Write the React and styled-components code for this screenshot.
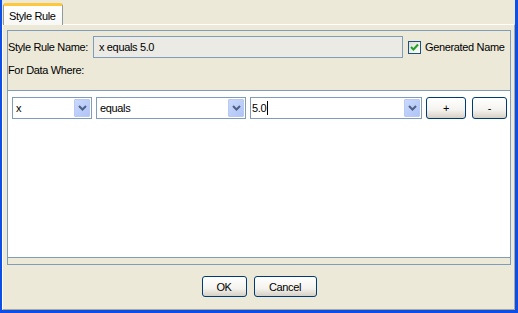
import React from 'react';
import styled, { createGlobalStyle } from 'styled-components';

const GlobalStyle = createGlobalStyle`
  html, body {
    margin: 0;
    padding: 0;
    background: #ece9d8;
  }
  body {
    font-family: "Liberation Sans", Arial, sans-serif;
    font-size: 11px;
    color: #000;
  }
`;

const Window = styled.div`
  width: 518px;
  height: 313px;
  box-sizing: border-box;
  display: flex;
  flex-direction: column;
  background: #ece9d8;
  border-left: 2px solid #0d4fe6;
  border-right: 3px solid #0d4fe6;
  border-bottom: 3px solid #0d4fe6;
  letter-spacing: -0.35px;
`;

const TabStrip = styled.div`
  height: 24px;
  display: flex;
  align-items: flex-end;
  padding-left: 1px;
`;

const Tab = styled.div`
  width: 60px;
  height: 22px;
  box-sizing: border-box;
  border: 1px solid #919b9c;
  border-top: 3px solid #ffc73c;
  border-bottom: none;
  border-radius: 3px 3px 0 0;
  background: linear-gradient(#ffffff, #f7f7f4);
  padding-left: 5px;
  display: flex;
  align-items: center;
  margin-bottom: -1px;
  position: relative;
  z-index: 1;
`;

const TabPane = styled.div`
  flex: 1;
  display: flex;
  flex-direction: column;
  border-top: 1px solid #fff;
  border-left: 1px solid #fff;
  border-right: 1px solid #aca899;
  border-bottom: 1px solid #aca899;
  padding: 5px 3px 0 4px;
`;

const Group = styled.div`
  height: 235px;
  box-sizing: border-box;
  border: 1px solid #7f9db9;
  display: flex;
  flex-direction: column;
`;

const NameRow = styled.div`
  margin-top: 5px;
  height: 22px;
  display: flex;
  align-items: center;
`;

const Label = styled.span`
  white-space: nowrap;
  line-height: 13px;
`;

const NameField = styled.div`
  margin-left: 5px;
  width: 310px;
  height: 22px;
  box-sizing: border-box;
  border: 1px solid #7f9db9;
  background: #ebeae4;
  padding-left: 5px;
  display: flex;
  align-items: center;
`;

const CheckLabel = styled.label`
  margin-left: 5px;
  display: flex;
  align-items: center;
  gap: 4px;
`;

const CheckBox = styled.span`
  width: 13px;
  height: 13px;
  box-sizing: border-box;
  border: 1px solid #1c5180;
  background: linear-gradient(135deg, #dcdcd7, #ffffff);
  display: flex;
  align-items: center;
  justify-content: center;
`;

const WhereLabel = styled.div`
  margin-top: 6px;
  height: 13px;
  line-height: 13px;
`;

const ListArea = styled.div`
  margin-top: 13px;
  height: 168px;
  box-sizing: border-box;
  border-top: 1px solid #7f9db9;
  border-bottom: 1px solid #7f9db9;
  background: #fff;
  padding: 6px 0 0 4px;
`;

const RuleRow = styled.div`
  display: flex;
  align-items: center;
`;

const Combo = styled.div`
  width: ${p => p.$width}px;
  margin-right: ${p => p.$gap}px;
  height: 22px;
  box-sizing: border-box;
  border: 1px solid #7f9db9;
  background: #fff;
  display: flex;
  align-items: center;
  padding: 1px 1px 1px ${p => (p.$editable ? 1 : 3)}px;
`;

const ComboText = styled.span`
  flex: 1;
  display: flex;
  align-items: center;
`;

const Caret = styled.span`
  width: 1px;
  height: 14px;
  background: #000;
  margin-left: 1px;
`;

const ArrowButton = styled.span`
  width: 16px;
  height: 18px;
  box-sizing: border-box;
  border: 1px solid #b9c9ef;
  border-radius: 1px;
  background: linear-gradient(135deg, #c9d8fc, #b0c4f7);
  display: flex;
  align-items: center;
  justify-content: center;
`;

const XpButton = styled.button`
  width: ${p => p.$width}px;
  height: ${p => p.$height || 21}px;
  margin-right: ${p => p.$gap || 0}px;
  box-sizing: border-box;
  border: 1px solid #003c74;
  border-radius: 3px;
  background: linear-gradient(#ffffff 0%, #f4f3ee 60%, #d6d0c5 100%);
  font-family: "Liberation Sans", Arial, sans-serif;
  font-size: 11px;
  letter-spacing: -0.35px;
  color: #000;
  padding: 0;
`;

const Footer = styled.div`
  flex: 1;
  display: flex;
  justify-content: center;
  align-items: flex-start;
  gap: 7px;
  padding-top: 11px;
`;

const Chevron = () => (
  <svg width="9" height="6" viewBox="0 0 9 6">
    <path d="M1 1 L4.5 4.5 L8 1" fill="none" stroke="#4d6185" strokeWidth="2" />
  </svg>
);

const Check = () => (
  <svg width="9" height="9" viewBox="0 0 9 9">
    <path d="M1 4 L3.5 6.5 L8 1.5" fill="none" stroke="#21a121" strokeWidth="2" />
  </svg>
);

const ComboBox = ({ width, gap, editable, children }) => (
  <Combo $width={width} $gap={gap} $editable={editable}>
    <ComboText>
      {children}
      {editable && <Caret />}
    </ComboText>
    <ArrowButton>
      <Chevron />
    </ArrowButton>
  </Combo>
);

export default function App() {
  return (
    <>
      <GlobalStyle />
      <Window>
        <TabStrip>
          <Tab>Style Rule</Tab>
        </TabStrip>
        <TabPane>
          <Group>
            <NameRow>
              <Label>Style Rule Name:</Label>
              <NameField>x equals 5.0</NameField>
              <CheckLabel>
                <CheckBox>
                  <Check />
                </CheckBox>
                <Label>Generated Name</Label>
              </CheckLabel>
            </NameRow>
            <WhereLabel>For Data Where:</WhereLabel>
            <ListArea>
              <RuleRow>
                <ComboBox width={80} gap={4}>x</ComboBox>
                <ComboBox width={150} gap={4}>equals</ComboBox>
                <ComboBox width={172} gap={4} editable>5.0</ComboBox>
                <XpButton $width={40} $height={22} $gap={6}>+</XpButton>
                <XpButton $width={35} $height={22}>-</XpButton>
              </RuleRow>
            </ListArea>
          </Group>
          <Footer>
            <XpButton $width={45}>OK</XpButton>
            <XpButton $width={63}>Cancel</XpButton>
          </Footer>
        </TabPane>
      </Window>
    </>
  );
}
